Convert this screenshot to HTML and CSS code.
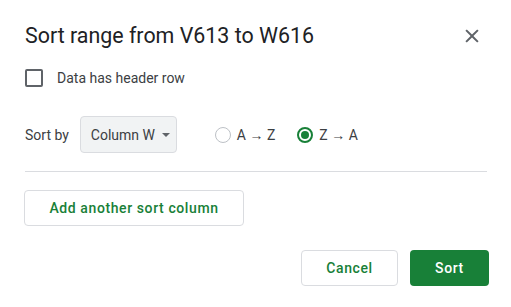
FILE: index.html
```html
<!DOCTYPE html>
<html>
<head>
<meta charset="utf-8" />
<title>Sort range</title>
<link rel="stylesheet" href="styles.css">
</head>
<body>
<div class="dialog">
	<div class="dialog_head">
		<h1 class="title">Sort range from V613 to W616</h1>
		<span class="close">
			<svg width="24" height="24" viewBox="0 0 24 24"><path d="M18.6 6.8 17.2 5.4 12 10.6 6.8 5.4 5.4 6.8 10.6 12 5.4 17.2 6.8 18.6 12 13.4 17.2 18.6 18.6 17.2 13.4 12z" fill="#5f6368"/></svg>
		</span>
	</div>
	<label class="check_row">
		<span class="checkbox"></span>
		<span class="check_text">Data has header row</span>
	</label>
	<div class="sort_row">
		<span class="sort_label">Sort by</span>
		<div class="select">Column W <span class="caret"></span></div>
		<div class="radios">
			<span class="radio"><span class="dot"></span>A → Z</span>
			<span class="radio on"><span class="dot"></span>Z → A</span>
		</div>
	</div>
	<div class="divider"></div>
	<div class="add_row">
		<button class="btn btn_add">Add another sort column</button>
	</div>
	<div class="dialog_foot">
		<button class="btn btn_cancel">Cancel</button>
		<button class="btn btn_sort">Sort</button>
	</div>
</div>
</body>
</html>
```
FILE: styles.css
```css
*{margin:0;padding:0;box-sizing:border-box;}
body{background:#fff;font-family:Roboto,"Liberation Sans",Arial,sans-serif;color:#3c4043;}
.dialog{
	padding:22px 23px 0 25px;
}
.dialog_head{
	display:flex;
	align-items:center;
	justify-content:space-between;
	height:28px;
}
.title{
	font-weight:400;
	font-size:21.4px;
	line-height:28px;
	color:#202124;
}
.close{display:block;width:24px;height:24px;margin-right:4px;}
.close svg{display:block;}
.check_row{
	display:flex;
	align-items:center;
	margin-top:19px;
	height:18px;
}
.checkbox{
	width:18px;
	height:18px;
	border:2px solid #5f6368;
	border-radius:2px;
}
.check_text{
	margin-left:14px;
	font-size:14px;
	color:#3c4043;
}
.sort_row{
	display:flex;
	align-items:center;
	margin-top:29px;
	height:37px;
}
.sort_label{font-size:14px;}
.select{
	display:flex;
	align-items:center;
	margin-left:11px;
	width:97px;
	height:37px;
	padding-left:10px;
	background:#f1f3f4;
	border:1px solid #dadce0;
	border-radius:4px;
	font-size:14px;
	color:#3c4043;
}
.caret{
	margin-left:7px;
	width:0;
	height:0;
	border-left:4px solid transparent;
	border-right:4px solid transparent;
	border-top:4px solid #5f6368;
}
.radios{display:flex;align-items:center;margin-left:38px;}
.radio{
	display:flex;
	align-items:center;
	font-size:14px;
	color:#3c4043;
	margin-right:22px;
}
.dot{
	width:16px;
	height:16px;
	border:1px solid #bdc1c6;
	border-radius:50%;
	margin-right:6px;
	display:flex;
	align-items:center;
	justify-content:center;
}
.on .dot{border:2px solid #188038;}
.on .dot:after{
	content:"";
	width:8px;
	height:8px;
	border-radius:50%;
	background:#188038;
}
.divider{
	margin-top:18px;
	height:1px;
	background:#dadce0;
	margin-right:1px;
}
.add_row{margin-top:18px;margin-left:-1px;}
.btn{
	height:36px;
	border-radius:4px;
	font-family:Roboto,"Liberation Sans",Arial,sans-serif;
	font-size:14px;
	font-weight:500;
	letter-spacing:0.6px;
	cursor:pointer;
}
.btn_add{
	width:220px;
	background:#fff;
	border:1px solid #dadce0;
	color:#188038;
}
.dialog_foot{
	display:flex;
	justify-content:flex-end;
	margin-top:24px;
	margin-right:-1px;
}
.btn_cancel{
	width:97px;
	background:#fff;
	border:1px solid #dadce0;
	color:#188038;
}
.btn_sort{
	width:79px;
	margin-left:12px;
	background:#188038;
	border:none;
	color:#fff;
}
```
